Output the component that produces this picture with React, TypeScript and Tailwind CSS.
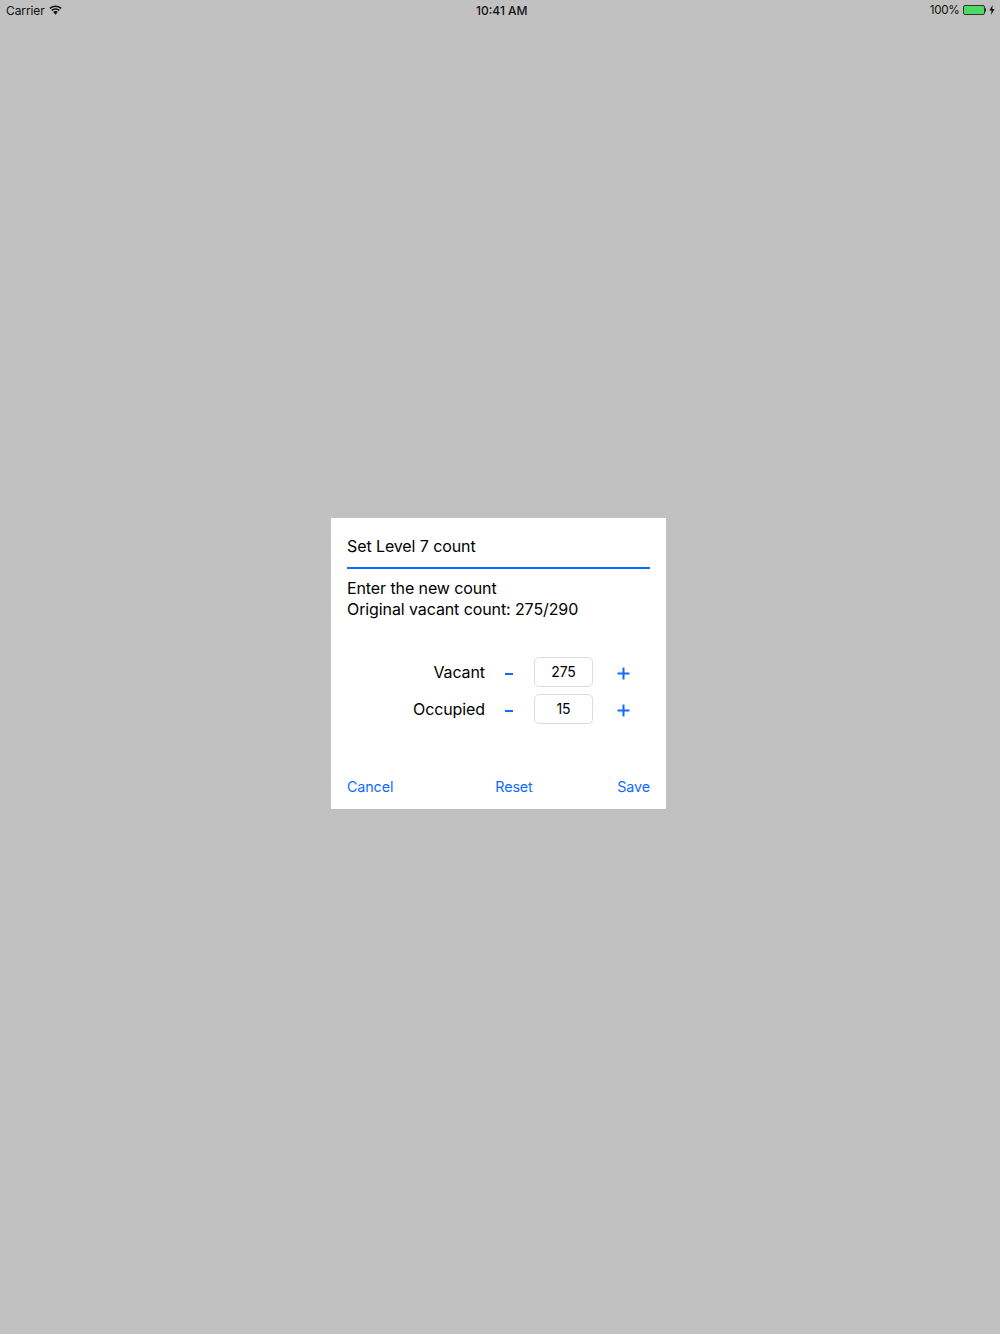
export default function App() {
  return (
    <div className="h-[1334px] w-[1000px] overflow-hidden bg-[#c1c1c1] font-['Inter',sans-serif] text-black">
      <div className="relative flex h-[20px] items-center justify-between pl-[6px] pr-[5px] text-[12px] text-[#111]">
        <div className="mt-[1px] flex items-center gap-[4px]">
          <span className="tracking-[-0.1px]">Carrier</span>
          <svg width="13" height="10" viewBox="0 0 14 10" className="mb-[2px]">
            <path d="M7 10 L4.4 7 Q7 5.2 9.6 7 Z" fill="#111" />
            <path d="M2.8 5.4 Q7 2.4 11.2 5.4" fill="none" stroke="#111" strokeWidth="1.7" />
            <path d="M0.8 3.2 Q7 -1.4 13.2 3.2" fill="none" stroke="#111" strokeWidth="1.7" />
          </svg>
        </div>
        <span className="absolute left-[476px] top-[2px] text-[12px] font-medium">10:41 AM</span>
        <div className="mt-[1px] flex items-center gap-[3px]">
          <span className="text-[11.7px] tracking-[-0.3px]">100%</span>
          <div className="flex items-center">
            <div className="h-[10px] w-[22px] rounded-[2px] border border-[#333] bg-[#4cd964]" />
            <div className="h-[4px] w-[1.5px] rounded-r-sm bg-[#333]" />
          </div>
          <svg width="6" height="10" viewBox="0 0 6 10">
            <path d="M3.6 0 L0.4 5.6 H2.6 L2 10 L5.6 4 H3.3 Z" fill="#111" />
          </svg>
        </div>
      </div>
      <div className="ml-[331px] mt-[498px] flex h-[291px] w-[335px] flex-col bg-white px-[16px]">
        <div className="mt-[17px] h-[34px] w-full border-b-2 border-[#0f6bff] text-[16px] leading-[22px] tracking-[-0.1px]">
          Set Level 7 count
        </div>
        <div className="mt-[9px] text-[16px] leading-[21px] tracking-[-0.1px]">
          <div>Enter the new count</div>
          <div>Original vacant count: 275/290</div>
        </div>
        <div className="mt-[37px] flex flex-col gap-[7px]">
          {[
            ["Vacant", "275"],
            ["Occupied", "15"],
          ].map(([label, value]) => (
            <div key={label} className="flex h-[30px] items-center">
              <div className="w-[138px] text-right text-[16px] tracking-[-0.1px]">{label}</div>
              <div className="ml-[20px] mt-[3px] w-[9px] text-center">
                <div className="h-[2px] w-[8px] bg-[#0f6bff]" />
              </div>
              <div className="ml-[20px] flex h-[30px] w-[59px] items-center justify-center rounded-[5px] border border-[#dcdcdc] pb-[1px] text-[14px] tracking-[-0.1px]">
                {value}
              </div>
              <svg width="13" height="13" viewBox="0 0 13 13" className="ml-[24px] mt-[2px]">
                <path d="M6.5 0.5 V12.5 M0.5 6.5 H12.5" stroke="#0f6bff" strokeWidth="2" fill="none" />
              </svg>
            </div>
          ))}
        </div>
        <div className="mt-[53px] flex items-center justify-between text-[14.3px] leading-[20px] tracking-[-0.1px] text-[#0f6bff]">
          <span className="w-[60px]">Cancel</span>
          <span className="ml-[31px]">Reset</span>
          <span className="w-[60px] text-right">Save</span>
        </div>
      </div>
    </div>
  );
}
